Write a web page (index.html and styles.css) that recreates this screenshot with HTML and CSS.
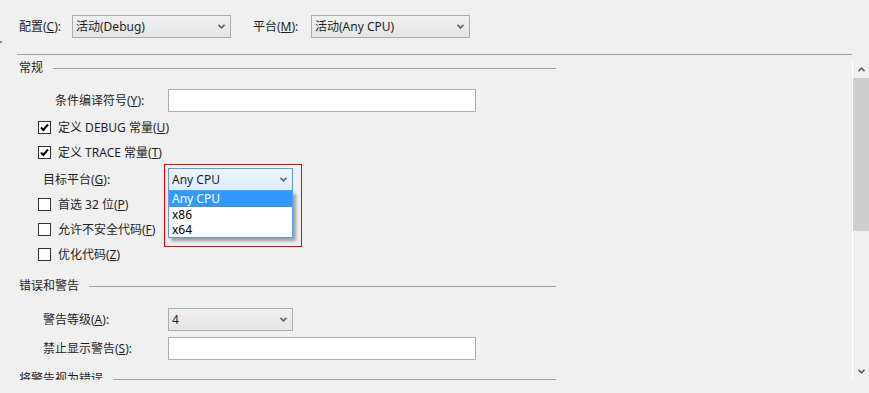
FILE: index.html
```html
<!DOCTYPE html>
<html lang="zh-CN">
<head>
    <meta charset="UTF-8">
    <title>生成</title>
    <link rel="stylesheet" href="styles.css">
</head>
<body>
    <div class="page">
        <span class="focus-dot"></span>

        <!-- 配置 / 平台 -->
        <div class="toolbar">
            <span class="tb-label">配置(<u>C</u>):</span>
            <div class="combo combo-wide">
                <span class="combo-text">活动(Debug)</span>
                <svg class="chev" width="7" height="5" viewBox="0 0 7 5"><path d="M0.5 0.8 L3.5 3.8 L6.5 0.8" fill="none" stroke="#606060" stroke-width="1.6"/></svg>
            </div>
            <span class="tb-label tb-label-2">平台(<u>M</u>):</span>
            <div class="combo combo-wide">
                <span class="combo-text">活动(Any CPU)</span>
                <svg class="chev" width="7" height="5" viewBox="0 0 7 5"><path d="M0.5 0.8 L3.5 3.8 L6.5 0.8" fill="none" stroke="#606060" stroke-width="1.6"/></svg>
            </div>
        </div>
        <div class="rule-top"></div>

        <div class="pane">
            <div class="content">
                <div class="section"><span>常规</span><span class="line"></span></div>

                <div class="field field-first">
                    <label class="field-label indent-wide">条件编译符号(<u>Y</u>):</label>
                    <div class="textbox"></div>
                </div>

                <div class="check check-first"><span class="box"><svg width="11" height="11" viewBox="0 0 11 11"><path d="M2 5.5 L4.3 8 L9 2.5" fill="none" stroke="#000" stroke-width="2"/></svg></span>定义 DEBUG 常量(<u>U</u>)</div>
                <div class="check"><span class="box"><svg width="11" height="11" viewBox="0 0 11 11"><path d="M2 5.5 L4.3 8 L9 2.5" fill="none" stroke="#000" stroke-width="2"/></svg></span>定义 TRACE 常量(<u>T</u>)</div>

                <div class="field field-target">
                    <label class="field-label">目标平台(<u>G</u>):</label>
                    <div class="dropdown">
                        <div class="combo combo-small combo-open">
                            <span class="combo-text">Any CPU</span>
                            <svg class="chev" width="7" height="5" viewBox="0 0 7 5"><path d="M0.5 0.8 L3.5 3.8 L6.5 0.8" fill="none" stroke="#606060" stroke-width="1.6"/></svg>
                        </div>
                        <ul class="dropdown-list">
                            <li class="selected">Any CPU</li>
                            <li>x86</li>
                            <li>x64</li>
                        </ul>
                        <span class="highlight-frame"></span>
                    </div>
                </div>

                <div class="check check-after"><span class="box"></span>首选 32 位(<u>P</u>)</div>
                <div class="check"><span class="box"></span>允许不安全代码(<u>F</u>)</div>
                <div class="check"><span class="box"></span>优化代码(<u>Z</u>)</div>

                <div class="section section-gap"><span>错误和警告</span><span class="line"></span></div>

                <div class="field field-level">
                    <label class="field-label">警告等级(<u>A</u>):</label>
                    <div class="combo combo-small">
                        <span class="combo-text">4</span>
                        <svg class="chev" width="7" height="5" viewBox="0 0 7 5"><path d="M0.5 0.8 L3.5 3.8 L6.5 0.8" fill="none" stroke="#606060" stroke-width="1.6"/></svg>
                    </div>
                </div>

                <div class="field field-suppress">
                    <label class="field-label">禁止显示警告(<u>S</u>):</label>
                    <div class="textbox"></div>
                </div>

                <div class="section section-gap"><span>将警告视为错误</span><span class="line"></span></div>
            </div>

            <div class="scrollbar">
                <div class="sb-btn">
                    <svg width="7" height="5" viewBox="0 0 7 5"><path d="M0.5 4.2 L3.5 1.2 L6.5 4.2" fill="none" stroke="#606060" stroke-width="1.6"/></svg>
                </div>
                <div class="sb-thumb"></div>
                <div class="sb-track"></div>
                <div class="sb-btn">
                    <svg width="7" height="5" viewBox="0 0 7 5"><path d="M0.5 0.8 L3.5 3.8 L6.5 0.8" fill="none" stroke="#606060" stroke-width="1.6"/></svg>
                </div>
            </div>
        </div>
    </div>
</body>
</html>
```

FILE: styles.css
```css
body {
    margin: 0;
    background: #f0f0f0;
    font-family: "Noto Sans", "Noto Sans CJK SC", sans-serif;
    font-size: 12px;
    line-height: 16px;
    color: #1e1e1e;
}
u {
    text-decoration: underline;
    text-underline-offset: 1px;
}
.page {
    position: relative;
    width: 869px;
    height: 393px;
    overflow: hidden;
}
.focus-dot {
    position: absolute;
    left: 0;
    top: 41px;
    width: 2px;
    height: 2px;
    background: #3399ff;
}
/* barra superior */
.toolbar {
    display: flex;
    align-items: center;
    padding: 15px 0 0 19px;
    height: 23px;
}
.tb-label {
    width: 53px;
}
.tb-label-2 {
    margin-left: 22px;
    width: 58px;
}
.rule-top {
    margin: 16px 0 0 17px;
    width: 835px;
    height: 1px;
    background: #a0a0a0;
}
/* combos */
.combo {
    box-sizing: border-box;
    height: 23px;
    border: 1px solid #acacac;
    background: linear-gradient(#f0f0f0, #e5e5e5);
    display: flex;
    align-items: center;
    justify-content: space-between;
    padding: 0 5px 0 3px;
    line-height: 21px;
}
.combo-wide {
    width: 159px;
}
.combo-small {
    width: 125px;
}
.combo-open {
    border-color: #569de5;
    background: linear-gradient(#ecf4fc, #dcecfc);
}
.chev {
    display: block;
}
.textbox {
    box-sizing: border-box;
    width: 308px;
    height: 23px;
    background: #fff;
    border: 1px solid #abadb3;
}
/* panel con scroll */
.pane {
    display: flex;
    margin-top: 5px;
    height: 320px;
}
.content {
    flex: 1;
    overflow: hidden;
}
.section {
    display: flex;
    align-items: center;
    gap: 10px;
    width: 537px;
    height: 16px;
    padding-left: 19px;
    white-space: nowrap;
}
.section .line {
    flex: 1;
    height: 1px;
    background: #a0a0a0;
}
.section-gap {
    margin-top: 11px;
}
.field {
    display: grid;
    grid-template-columns: 168px auto;
    align-items: center;
}
.field-label {
    padding-left: 43px;
}
.field-label.indent-wide {
    padding-left: 55px;
}
.field-first {
    margin-top: 13px;
}
.field-target {
    margin-top: 3px;
}
.field-level {
    margin-top: 14px;
}
.field-suppress {
    margin-top: 6px;
}
.check {
    display: flex;
    align-items: center;
    height: 25px;
    padding-left: 38px;
}
.check-first {
    margin-top: 3px;
}
.check-after {
    margin-top: 1px;
}
.check .box {
    box-sizing: border-box;
    width: 13px;
    height: 13px;
    margin-right: 7px;
    border: 1px solid #333;
    background: #fff;
    display: flex;
    align-items: center;
    justify-content: center;
}
.check .box svg {
    display: block;
}
/* lista desplegada */
.dropdown {
    position: relative;
    width: 125px;
}
.dropdown-list {
    position: absolute;
    left: 0;
    top: 23px;
    z-index: 2;
    box-sizing: border-box;
    width: 125px;
    margin: 0;
    padding: 0;
    list-style: none;
    background: #fff;
    border: 1px solid #569de5;
    border-top: none;
    box-shadow: 3px 3px 3px rgba(0,0,0,0.35);
}
.dropdown-list li {
    height: 15px;
    line-height: 15px;
    padding-left: 3px;
    color: #000;
}
.dropdown-list li.selected {
    height: 16px;
    line-height: 16px;
    background: #3399ff;
    color: #fff;
}
.highlight-frame {
    position: absolute;
    left: -4px;
    top: -4px;
    z-index: 3;
    width: 136px;
    height: 81px;
    border: 1px solid #ff0000;
    pointer-events: none;
}
/* barra de desplazamiento */
.scrollbar {
    width: 16px;
    margin-top: 1px;
    border-left: 1px solid #fff;
    display: flex;
    flex-direction: column;
}
.sb-btn {
    height: 17px;
    display: flex;
    align-items: center;
    justify-content: center;
}
.sb-btn svg {
    display: block;
}
.sb-thumb {
    height: 153px;
    background: #cdcdcd;
}
.sb-track {
    flex: 1;
}
```
